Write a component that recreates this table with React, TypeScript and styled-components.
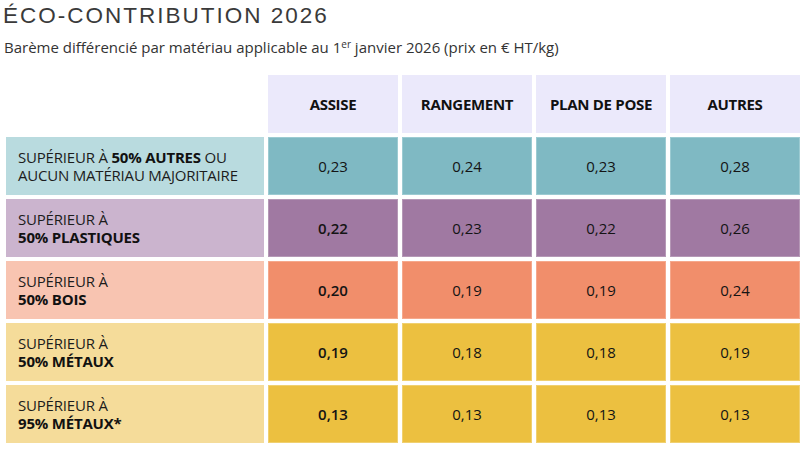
import React from "react";
import styled, { createGlobalStyle } from "styled-components";

const GlobalStyle = createGlobalStyle`
  body {
    margin: 0;
    background: #ffffff;
    font-family: "Open Sans", "Liberation Sans", sans-serif;
  }
`;

const Page = styled.div`
  padding: 2px 0 0 4px;
`;

const Title = styled.h1`
  margin: 0 0 0 -1px;
  font-family: "Liberation Sans", Arial, sans-serif;
  font-weight: 400;
  font-size: 22.5px;
  line-height: 28px;
  letter-spacing: 2px;
  color: #3a3a3a;
`;

const Subtitle = styled.p`
  margin: 7px 0 0;
  font-size: 15px;
  line-height: 20px;
  color: #333333;

  sup {
    font-size: 10px;
    line-height: 0;
    vertical-align: 5px;
  }
`;

const Grid = styled.div`
  display: grid;
  grid-template-columns: 258px repeat(4, 130px);
  grid-auto-rows: 58px;
  gap: 4px;
  margin: 18px 0 0 2px;
`;

type Tone = "teal" | "purple" | "salmon" | "yellow";

const palette: Record<Tone, { label: string; cell: string; edge: string }> = {
  teal: { label: "#b9dbdf", cell: "#7fb9c3", edge: "#9ccbd2" },
  purple: { label: "#cbb4ce", cell: "#a079a2", edge: "#b598b6" },
  salmon: { label: "#f8c4b1", cell: "#f18e6b", edge: "#f5a88c" },
  yellow: { label: "#f5dc9a", cell: "#ecc040", edge: "#f0d070" },
};

const Blank = styled.div``;

const HeadCell = styled.div`
  background: #ebe9fb;
  display: flex;
  align-items: center;
  justify-content: center;
  font-size: 15px;
  font-weight: 700;
  color: #111111;
  letter-spacing: -0.3px;
`;

const Label = styled.div<{ $tone: Tone }>`
  background: ${(p) => palette[p.$tone].label};
  display: flex;
  align-items: center;
  padding: 0 10px 0 12px;
  font-size: 15px;
  line-height: 18px;
  color: #1c1c1c;
  letter-spacing: -0.2px;

  b {
    font-weight: 700;
    color: #111111;
  }
`;

const Value = styled.div<{ $tone: Tone; $strong?: boolean }>`
  background: ${(p) => palette[p.$tone].cell};
  border: 1px solid ${(p) => palette[p.$tone].edge};
  display: flex;
  align-items: center;
  justify-content: center;
  font-size: 15px;
  font-weight: ${(p) => (p.$strong ? 600 : 400)};
  color: #141414;
`;

const columns = ["ASSISE", "RANGEMENT", "PLAN DE POSE", "AUTRES"];

const rows: { tone: Tone; label: React.ReactNode; values: string[]; strong: boolean }[] = [
  {
    tone: "teal",
    label: (
      <span>
        SUPÉRIEUR À <b>50% AUTRES</b> OU
        <br />
        AUCUN MATÉRIAU MAJORITAIRE
      </span>
    ),
    values: ["0,23", "0,24", "0,23", "0,28"],
    strong: false,
  },
  {
    tone: "purple",
    label: (
      <span>
        SUPÉRIEUR À
        <br />
        <b>50% PLASTIQUES</b>
      </span>
    ),
    values: ["0,22", "0,23", "0,22", "0,26"],
    strong: true,
  },
  {
    tone: "salmon",
    label: (
      <span>
        SUPÉRIEUR À
        <br />
        <b>50% BOIS</b>
      </span>
    ),
    values: ["0,20", "0,19", "0,19", "0,24"],
    strong: true,
  },
  {
    tone: "yellow",
    label: (
      <span>
        SUPÉRIEUR À
        <br />
        <b>50% MÉTAUX</b>
      </span>
    ),
    values: ["0,19", "0,18", "0,18", "0,19"],
    strong: true,
  },
  {
    tone: "yellow",
    label: (
      <span>
        SUPÉRIEUR À
        <br />
        <b>95% MÉTAUX*</b>
      </span>
    ),
    values: ["0,13", "0,13", "0,13", "0,13"],
    strong: true,
  },
];

export default function App() {
  return (
    <Page>
      <GlobalStyle />
      <Title>ÉCO-CONTRIBUTION 2026</Title>
      <Subtitle>
        Barème différencié par matériau applicable au 1<sup>er</sup> janvier 2026 (prix en € HT/kg)
      </Subtitle>
      <Grid>
        <Blank />
        {columns.map((c) => (
          <HeadCell key={c}>{c}</HeadCell>
        ))}
        {rows.map((r, i) => (
          <React.Fragment key={i}>
            <Label $tone={r.tone}>{r.label}</Label>
            {r.values.map((v, j) => (
              <Value key={j} $tone={r.tone} $strong={r.strong && j === 0}>
                {v}
              </Value>
            ))}
          </React.Fragment>
        ))}
      </Grid>
    </Page>
  );
}
